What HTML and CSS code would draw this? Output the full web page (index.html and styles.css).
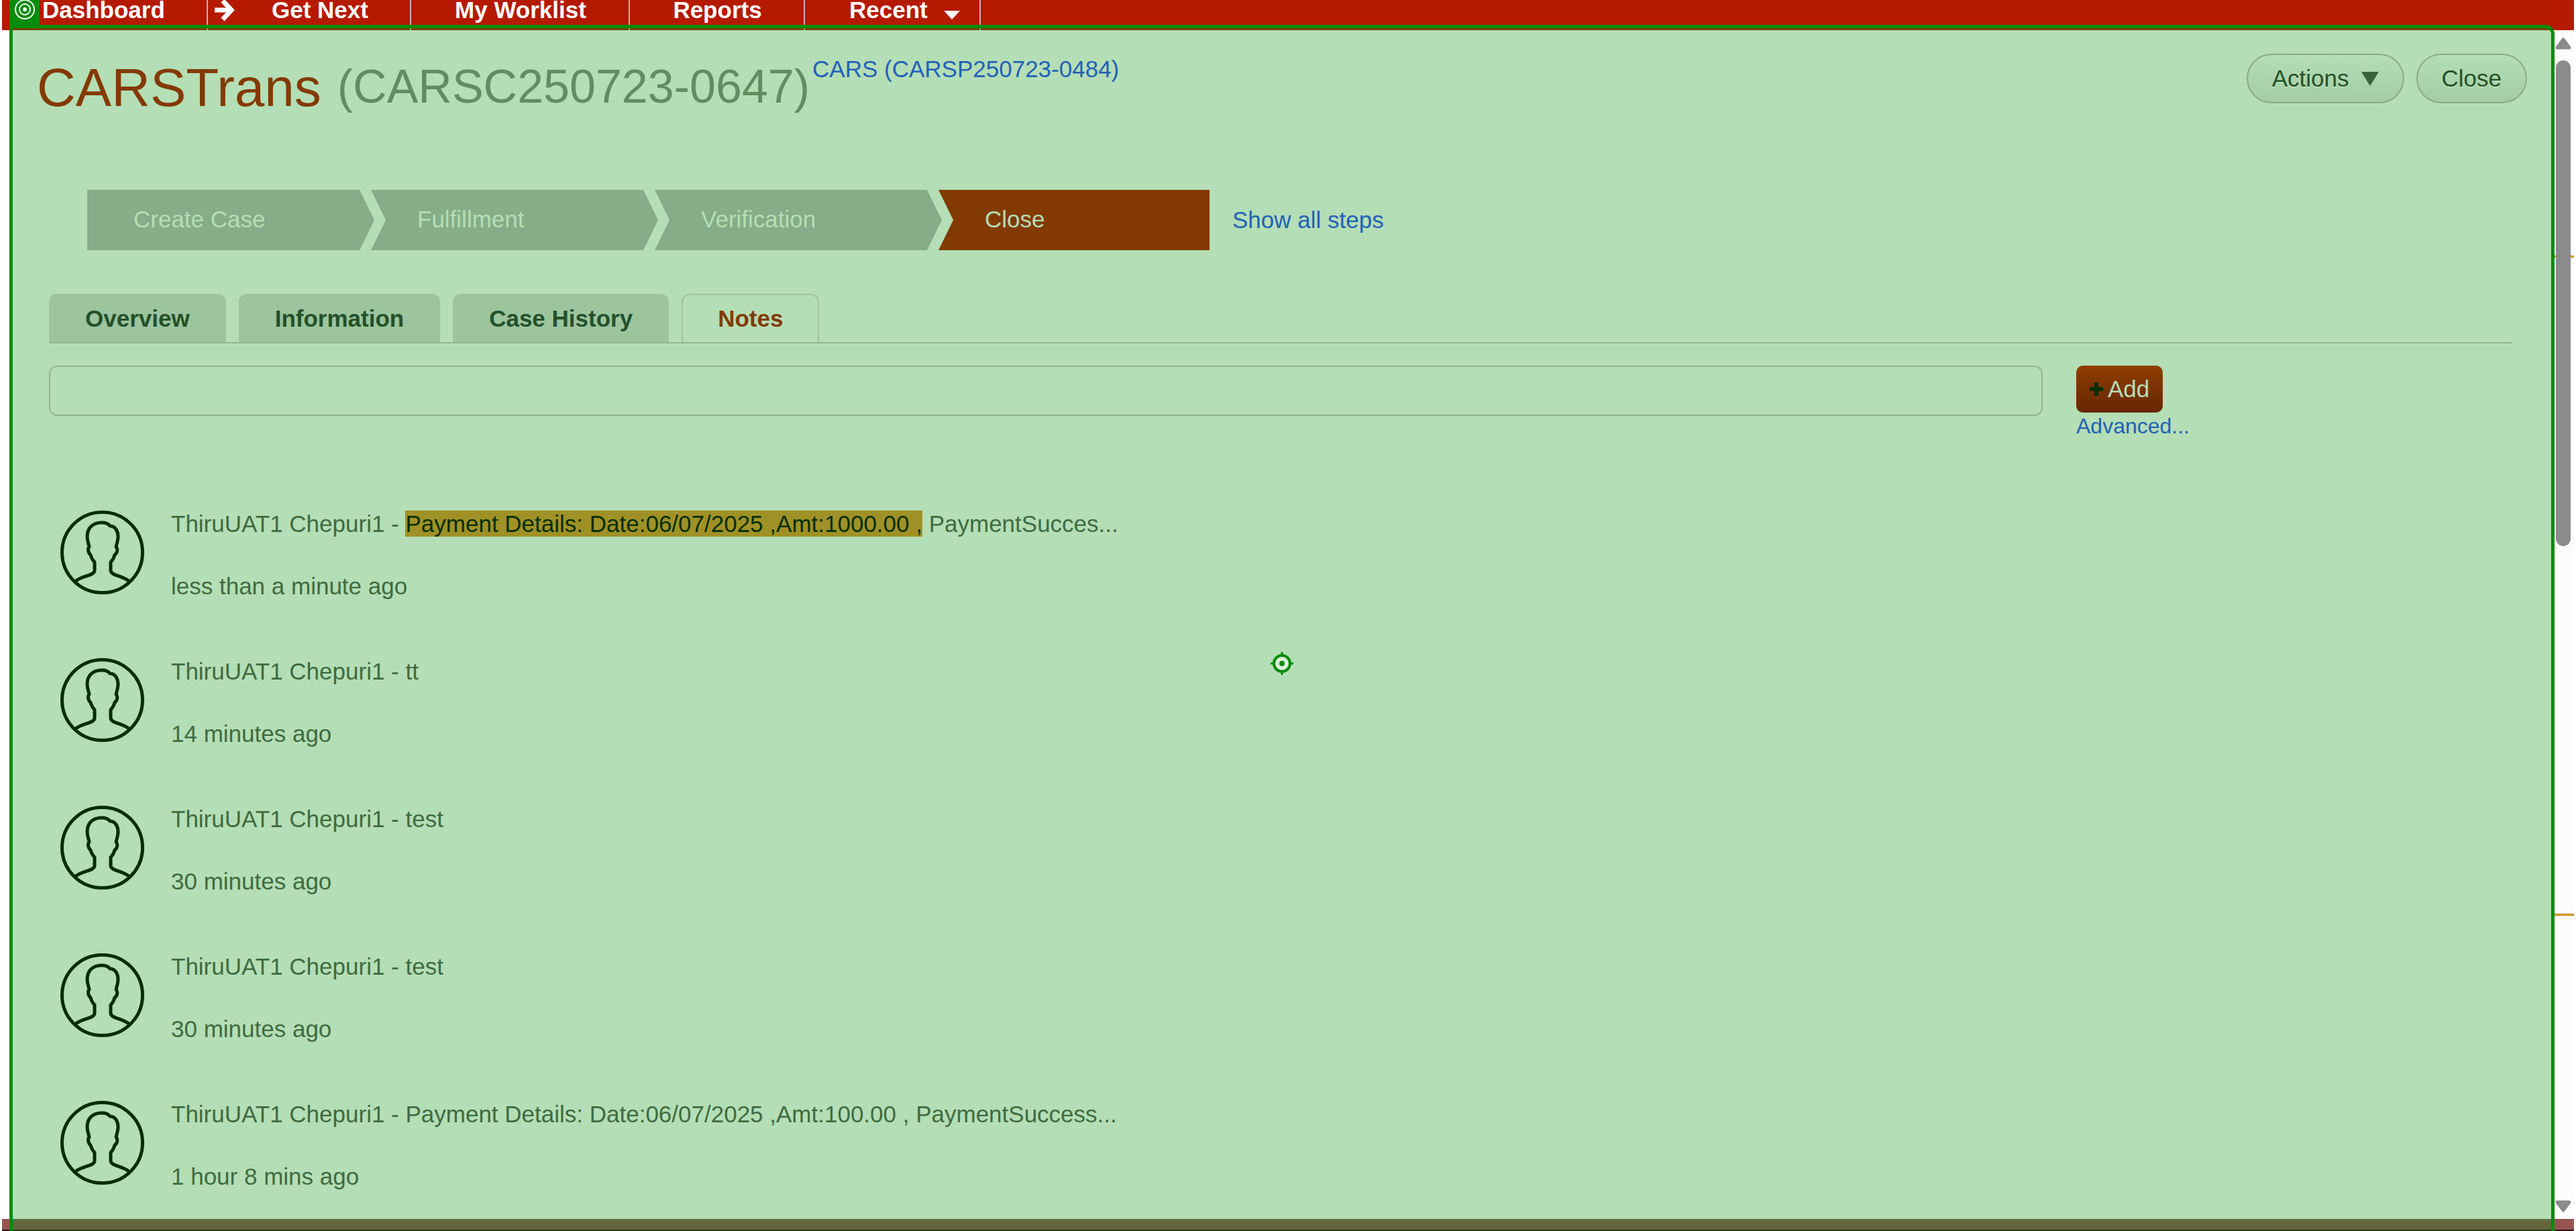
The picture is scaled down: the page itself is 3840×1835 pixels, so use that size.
FILE: index.html
```html
<!DOCTYPE html>
<html lang="en">
<head>
<meta charset="utf-8">
<meta name="viewport" content="width=device-width, initial-scale=1">
<title>CARSTrans (CARSC250723-0647)</title>
<link rel="stylesheet" href="styles.css">
</head>
<body>
<svg class="defs" aria-hidden="true">
  <symbol id="avatar" viewBox="0 0 125 125">
    <g fill="none" stroke="#022e05" stroke-width="5" stroke-linejoin="round">
      <circle cx="62.500" cy="62.500" r="60"/>
      <path d="M23 105C31 99 41 98 48 94Q51 92 51 89V77C48 74 46 70 45 66C42 64 40 57 43 54C42 49 40 45 40 39C40 27 47 18 62 18Q70 18 74 23C82 23 86 31 86 39C86 44 84 50 83 54C86 57 85 64 81 66C80 70 78 74 75 77V89Q75 92 78 94C85 98 94 99 102 105"/>
    </g>
  </symbol>
</svg>

<nav class="nav">
  <a class="nav-item nav-home" href="#"><span class="target"><svg width="32" height="32" viewBox="0 0 32 32" fill="none" stroke="#fff" stroke-width="2"><circle cx="16" cy="16" r="14"/><circle cx="16" cy="16" r="8"/><circle cx="16" cy="16" r="2" fill="#fff"/></svg></span>Dashboard</a>
  <a class="nav-item nav-next" href="#"><svg class="arrow" width="32" height="32" viewBox="0 0 32 32" fill="none" stroke="#fff" stroke-width="7"><path d="M1 15H24M13 1L26 15L13 29"/></svg><span class="next-label">Get Next</span></a>
  <a class="nav-item nav-work" href="#">My Worklist</a>
  <a class="nav-item nav-reports" href="#">Reports</a>
  <a class="nav-item nav-recent" href="#">Recent<svg class="caret" width="24" height="13" viewBox="0 0 24 13" fill="#fff"><path d="M0 0H24L12 13Z"/></svg></a>
</nav>

<div class="body-row">
  <main class="case">
    <header class="case-head">
      <h1 class="title">CARSTrans</h1>
      <span class="case-id">(CARSC250723-0647)</span>
      <a class="parent" href="#">CARS (CARSP250723-0484)</a>
      <div class="head-actions">
        <button class="pill" type="button">Actions<svg width="26" height="21" viewBox="0 0 26 21" fill="#37643a"><path d="M0 0H26L13 21Z"/></svg></button>
        <button class="pill" type="button">Close</button>
      </div>
    </header>

    <div class="steps-row">
      <ol class="steps">
        <li class="step step-first">Create Case</li>
        <li class="step">Fulfillment</li>
        <li class="step">Verification</li>
        <li class="step step-current">Close</li>
      </ol>
      <a class="link" href="#">Show all steps</a>
    </div>

    <div class="tabs" role="tablist">
      <button class="tab" role="tab" type="button">Overview</button>
      <button class="tab" role="tab" type="button">Information</button>
      <button class="tab" role="tab" type="button">Case History</button>
      <button class="tab tab-active" role="tab" type="button" aria-selected="true">Notes</button>
    </div>

    <form class="composer">
      <input class="note-input" type="text" aria-label="Note">
      <div class="composer-side">
        <button class="add" type="button"><svg width="20" height="20" viewBox="0 0 20 20" fill="#022e05"><path d="M7 0H13V7H20V13H13V20H7V13H0V7H7Z"/></svg>Add</button>
        <a class="advanced" href="#">Advanced...</a>
      </div>
    </form>

    <ul class="notes">
      <li class="note"><svg class="avatar"><use href="#avatar"/></svg><div class="note-text"><p>ThiruUAT1 Chepuri1 - <mark>Payment Details: Date:06/07/2025 ,Amt:1000.00 ,</mark> PaymentSucces...</p><p>less than a minute ago</p></div></li>
      <li class="note"><svg class="avatar"><use href="#avatar"/></svg><div class="note-text"><p>ThiruUAT1 Chepuri1 - tt</p><p>14 minutes ago</p></div></li>
      <li class="note"><svg class="avatar"><use href="#avatar"/></svg><div class="note-text"><p>ThiruUAT1 Chepuri1 - test</p><p>30 minutes ago</p></div></li>
      <li class="note"><svg class="avatar"><use href="#avatar"/></svg><div class="note-text"><p>ThiruUAT1 Chepuri1 - test</p><p>30 minutes ago</p></div></li>
      <li class="note"><svg class="avatar"><use href="#avatar"/></svg><div class="note-text"><p>ThiruUAT1 Chepuri1 - Payment Details: Date:06/07/2025 ,Amt:100.00 , PaymentSuccess...</p><p>1 hour 8 mins ago</p></div></li>
    </ul>
    <svg class="crosshair" width="34" height="34" viewBox="0 0 34 34"><path d="M17 0V34M0 17H34" stroke="#048c0a" stroke-width="3"/><circle cx="17" cy="17" r="12" fill="#deeedd" stroke="#048c0a" stroke-width="4"/><circle cx="17" cy="17" r="4" fill="#048c0a"/></svg>
  </main>

  <div class="scrollbar">
    <svg width="24" height="18" viewBox="0 0 24 18"><path d="M12 3L21 15H3Z" fill="#8b8b8b" stroke="#8b8b8b" stroke-width="5" stroke-linejoin="round"/></svg>
    <div class="track"><div class="thumb"></div></div>
    <svg width="24" height="18" viewBox="0 0 24 18"><path d="M12 15L21 3H3Z" fill="#8b8b8b" stroke="#8b8b8b" stroke-width="5" stroke-linejoin="round"/></svg>
    <i class="mark-line mark-upper"></i>
    <i class="mark-line mark-lower"></i>
  </div>
</div>
<footer class="foot"><div class="foot-inner"></div></footer>
</body>
</html>
```
FILE: styles.css
```css
* { box-sizing: border-box; }

body {
  margin: 0;
  height: 100vh;
  display: flex;
  flex-direction: column;
  overflow: hidden;
  background: #fff;
  color: #3f6b41;
  font-family: "Liberation Sans", Arial, sans-serif;
  font-size: 35px;
  line-height: 40px;
}

button, input { font: inherit; }
a { color: #2260b8; text-decoration: none; }
h1, p, ul, ol { margin: 0; padding: 0; font-weight: normal; }
.defs { position: absolute; width: 0; height: 0; }

.nav {
  flex: none;
  display: flex;
  height: 45px;
  margin: 0 3px;
  padding-left: 11px;
  background: #b51a00;
}
.nav-item {
  display: flex;
  align-items: flex-start;
  height: 45px;
  line-height: 30px;
  color: #fff;
  font-weight: bold;
  border-right: 2px solid #c6b3ae;
}
.nav-home { width: 296px; gap: 4px; }
.target {
  display: flex;
  justify-content: center;
  width: 45px;
  height: 40px;
  background: #048c0a;
}
.target svg { margin-top: -2px; }
.nav-next { width: 303px; padding-left: 9px; }
.next-label { flex: 1; padding-left: 54px; }
.nav-work { width: 326px; padding-left: 2px; justify-content: center; }
.nav-reports { width: 261px; padding-left: 2px; justify-content: center; }
.nav-recent { width: 262px; padding-left: 66px; gap: 24px; }
.caret { margin-top: 16px; }

.body-row {
  flex: 1;
  min-height: 0;
  display: flex;
  margin: -8px 3px 0 14px;
}
.case {
  position: relative;
  flex: 1;
  min-width: 0;
  overflow: hidden;
  border: 5px solid #048c0a;
  border-bottom: 0;
  border-top-right-radius: 14px;
  background: linear-gradient(rgba(0, 140, 10, .35) 3px, #b4deb5 3px) padding-box;
}
.case-head {
  display: flex;
  height: 241px;
  padding: 38px 36px 0;
}
.title { margin-top: 5px; font-size: 80px; line-height: 92px; color: #833a02; }
.case-id { margin: 9px 0 0 24px; font-size: 70px; line-height: 80px; color: #618d63; }
.parent { margin: 3px 0 0 4px; }
.head-actions {
  display: flex;
  gap: 18px;
  margin-left: auto;
}
.pill {
  display: flex;
  align-items: center;
  gap: 18px;
  height: 74px;
  padding: 0 36px;
  border: 2px solid #85ad87;
  border-radius: 37px;
  background: linear-gradient(#b4deb5, #a2cca4);
  color: #24502a;
  text-shadow: 0 2px 0 #b4deb5;
}

.steps-row { display: flex; align-items: center; gap: 34px; padding-left: 111px; }
.steps { display: flex; list-style: none; }
.step {
  width: 428px;
  margin-right: -5px;
  padding: 24px 0 26px 69px;
  background: #85ad87;
  color: #b4deb5;
  clip-path: polygon(0 0, calc(100% - 22px) 0, 100% 50%, calc(100% - 22px) 100%, 0 100%, 22px 50%);
}
.step-first { clip-path: polygon(0 0, calc(100% - 22px) 0, 100% 50%, calc(100% - 22px) 100%, 0 100%); }
.step-current {
  width: 404px;
  margin-right: 0;
  background: #833a02;
  clip-path: polygon(0 0, 100% 0, 100% 100%, 0 100%, 22px 50%);
}

.tabs {
  display: flex;
  gap: 19px;
  margin: 65px 58px 0 54px;
  border-bottom: 2px solid #8fb891;
}
.tab {
  height: 72px;
  padding: 0 52px;
  border: 2px solid #9cc59e;
  border-bottom: 0;
  border-radius: 12px 12px 0 0;
  background: #9cc59e;
  color: #24502a;
  font-weight: bold;
}
.tab-active { background: #b4deb5; color: #833a02; }

.composer { display: flex; gap: 50px; margin: 33px 58px 0 54px; }
.note-input {
  flex: 1;
  min-width: 0;
  height: 75px;
  border: 2px solid #8fb891;
  border-radius: 12px;
  background: #b4deb5;
}
.composer-side {
  display: flex;
  flex-direction: column;
  align-items: flex-start;
  width: 650px;
}
.add {
  display: flex;
  align-items: center;
  gap: 7px;
  height: 70px;
  padding: 0 20px;
  border: 0;
  border-radius: 10px;
  background: linear-gradient(#8f3e02, #662603);
  color: #b4deb5;
}
.advanced { font-size: 32px; }

.notes { margin: 106px 0 0 71px; list-style: none; }
.note { display: flex; gap: 40px; height: 220px; }
.avatar { width: 125px; height: 125px; }
.note-text { display: flex; flex-direction: column; gap: 53px; }
mark { background: #a09126; color: #022e05; }

.crosshair { position: absolute; left: 50%; top: 930px; margin-left: -17px; }

.scrollbar {
  position: relative;
  width: 29px;
  margin-top: 8px;
  padding: 11px 5px 10px 1px;
  display: flex;
  flex-direction: column;
  background: #fcfcfc;
}
.scrollbar svg { flex: none; }
.track { flex: 1; margin: 16px 0; }
.thumb {
  position: relative;
  z-index: 1;
  width: 22px;
  height: 43%;
  margin-left: 1px;
  border-radius: 11px;
  background: #8b8b8b;
}
.mark-line {
  position: absolute;
  left: 0;
  right: 0;
  height: 3px;
  border: solid #a56a00;
  border-width: 1px 0;
  background: #ffd23c;
}
.mark-upper { top: 336px; }
.mark-lower { top: 1317px; }

.foot {
  flex: none;
  height: 18px;
  margin: 0 3px;
  padding: 0 29px 0 11px;
  background: linear-gradient(#955450 16px, #2b1416 16px);
}
.foot-inner {
  height: 18px;
  border: solid #048c0a;
  border-width: 0 5px;
  background: linear-gradient(#5f7045 3px, #66643a 3px, #66643a 16px, #1f3a14 16px);
}
```
